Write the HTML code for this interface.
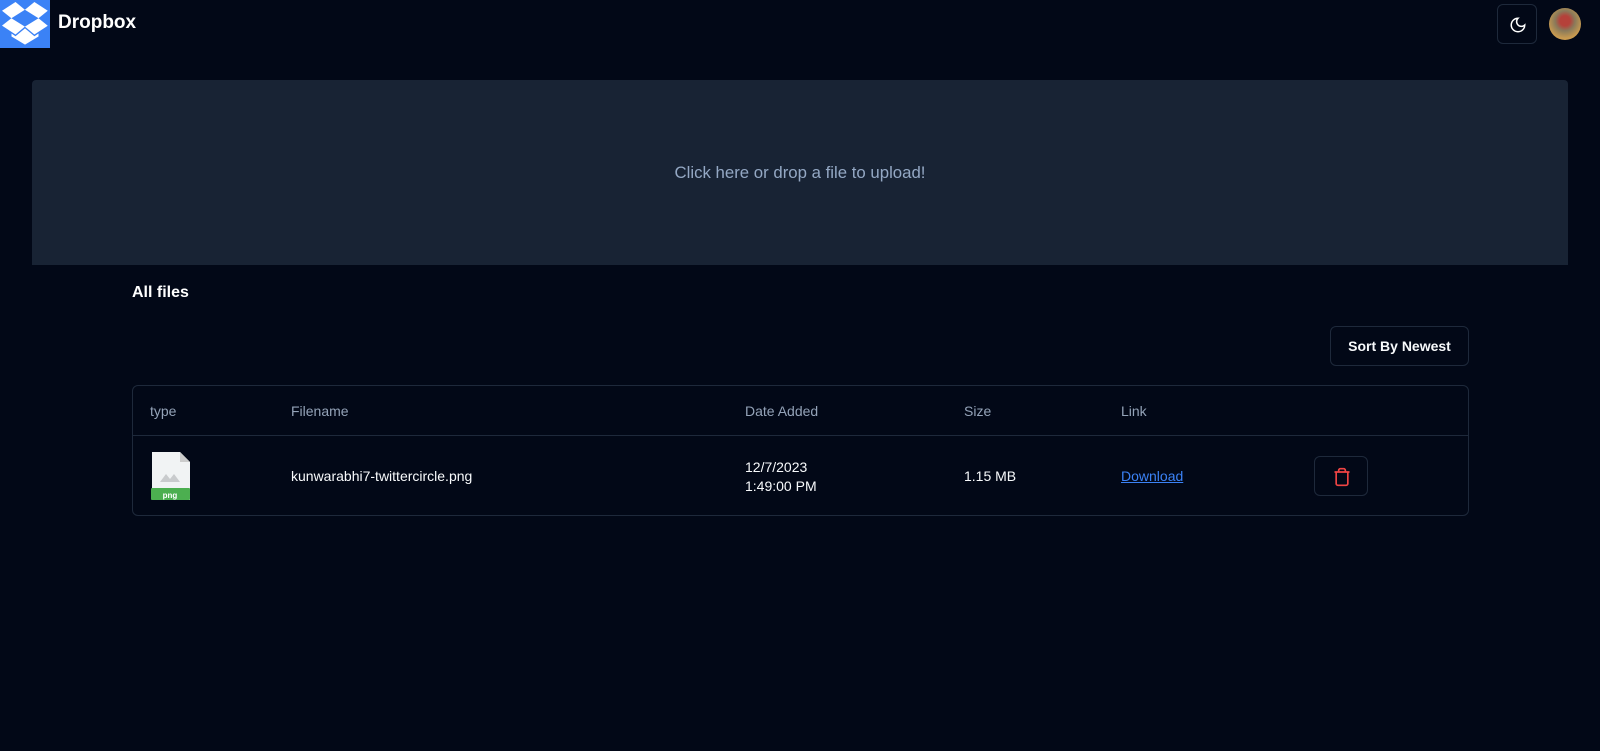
<!DOCTYPE html>
<html><head><meta charset="utf-8"><style>
*{box-sizing:border-box;margin:0;padding:0}
body{width:1600px;height:751px;background:#020817;font-family:"Liberation Sans",sans-serif;color:#f8fafc;position:relative;overflow:hidden}
.abs{position:absolute}
.logo{left:0;top:0;width:50px;height:48px;background:#3b82f6}
.brand{left:58px;top:12px;font-size:19px;font-weight:bold;color:#fff}
.btn{border:1px solid #1e293b;border-radius:6px}
.drop{left:32px;top:80px;width:1536px;height:185px;background:#182334;border-radius:4px 4px 0 0;text-align:center;line-height:185px;color:#94a8c4;font-size:16.8px}
.h{left:132px;top:284px;font-size:16px;font-weight:bold;color:#fff}
.table{left:132px;top:385px;width:1337px;height:131px;border:1px solid #1e293b;border-radius:6px}
.th{top:17px;font-size:14px;color:#94a3b8}
.td{font-size:14px;color:#f8fafc}
</style></head><body>
<div class="abs logo"><svg width="50" height="48" viewBox="0 0 50 48"><g transform="translate(2,2) scale(1.08)"><path fill="#fff" d="M12.5 0L0 8.1l8.7 7L21.2 7.2 12.5 0zM0 21.9l12.5 8.2 8.7-7.3-12.5-7.7L0 21.9zm21.2 .9l8.8 7.300 12.4-8.1-8.6-6.9-12.600 7.7zm21.2-14.7L30 0l-8.8 7.2 12.6 7.9 8.6-7zM21.3 24.4l-8.8 7.3-3.700-2.5v2.8l12.5 7.5 12.5-7.5v-2.8l-3.8 2.5-8.7-7.3z"/></g></svg></div>
<div class="abs brand">Dropbox</div>
<div class="abs btn" style="left:1497px;top:4px;width:40px;height:40px"><svg class="abs" style="left:11px;top:11px" width="18" height="18" viewBox="0 0 24 24" fill="none" stroke="#fff" stroke-width="2" stroke-linecap="round"><path d="M12 3a6 6 0 0 0 9 9 9 9 0 1 1-9-9z"/></svg></div>
<div class="abs" style="left:1549px;top:8px;width:32px;height:32px;border-radius:50%;background:radial-gradient(circle at 50% 40%,#b5413a 0 20%,#8a7a5a 40%,#c89a50 70%)"></div>
<div class="abs drop">Click here or drop a file to upload!</div>
<div class="abs h">All files</div>
<div class="abs btn" style="left:1330px;top:326px;width:139px;height:40px;text-align:center;line-height:38px;font-size:14px;font-weight:bold">Sort By Newest</div>
<div class="abs table">
<div class="abs th" style="left:17px">type</div>
<div class="abs th" style="left:158px">Filename</div>
<div class="abs th" style="left:612px">Date Added</div>
<div class="abs th" style="left:831px">Size</div>
<div class="abs th" style="left:988px">Link</div>
<div class="abs" style="left:0;top:49px;width:100%;border-top:1px solid #1e293b"></div>
<div class="abs" style="left:17px;top:66px;width:40px;height:48px"><svg width="40" height="48" viewBox="0 0 40 48"><path d="M2 0h28l10 10v38H2z" fill="#f1f3f4"/><path d="M30 0v10h10z" fill="#ccc"/><rect x="1" y="36" width="39" height="12" rx="1" fill="#4caf50"/><polygon points="10,30 16,22 20,27 24,22 30,30" fill="#c9cbcd"/><text x="20" y="46" text-anchor="middle" font-size="8" font-weight="bold" fill="#fff" font-family="Liberation Sans">png</text></svg></div>
<div class="abs td" style="left:158px;top:82px">kunwarabhi7-twittercircle.png</div>
<div class="abs td" style="left:612px;top:72px;line-height:19px">12/7/2023<br>1:49:00 PM</div>
<div class="abs td" style="left:831px;top:82px">1.15 MB</div>
<div class="abs td" style="left:988px;top:82px;color:#3b82f6;text-decoration:underline">Download</div>
<div class="abs btn" style="left:1181px;top:70px;width:54px;height:40px"><svg class="abs" style="left:17px;top:10px" width="20" height="20" viewBox="0 0 24 24" fill="none" stroke="#ef4444" stroke-width="2"><path d="M3 6h18M19 6v14a2 2 0 0 1-2 2H7a2 2 0 0 1-2-2V6M8 6V4a2 2 0 0 1 2-2h4a2 2 0 0 1 2 2v2"/></svg></div>
</div>
</body></html>
